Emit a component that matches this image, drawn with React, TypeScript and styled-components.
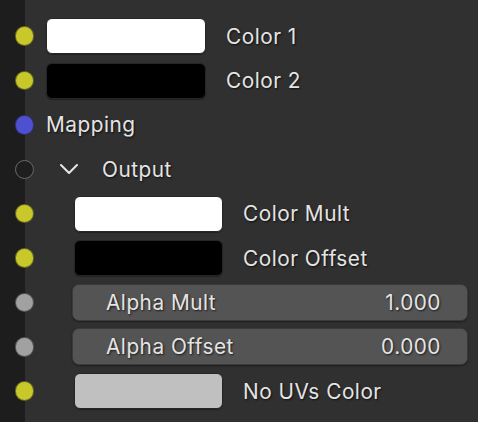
import * as React from 'react';
import styled, { createGlobalStyle } from 'styled-components';

const GlobalStyle = createGlobalStyle`
  html, body {
    margin: 0;
    padding: 0;
    background: #303030;
  }
  body {
    font-family: Inter, "DejaVu Sans", sans-serif;
  }
`;

const ROW_H = 44.375;

const Frame = styled.div`
  display: flex;
  width: 478px;
  height: 422px;
  overflow: hidden;
`;

const Strip = styled.div`
  width: 25px;
  flex-shrink: 0;
  background: #1d1d1d;
`;

const Body = styled.div`
  flex: 1;
  background: #303030;
  padding-top: 14px;
  display: flex;
  flex-direction: column;
`;

const Row = styled.div`
  display: flex;
  align-items: center;
  height: ${ROW_H}px;
  padding-right: 10px;
`;

const Socket = styled.div<{ $color: string; $hollow?: boolean }>`
  width: 17.5px;
  height: 17.5px;
  margin-left: -10.5px;
  flex-shrink: 0;
  border-radius: 50%;
  background: ${p => (p.$hollow ? '#1e1e1e' : p.$color)};
  border: 1.5px solid ${p => (p.$hollow ? '#6a6a6a' : 'rgba(30,30,30,0.55)')};
`;

const Content = styled.div<{ $indent: number }>`
  display: flex;
  align-items: center;
  flex: 1;
  margin-left: ${p => 12 + p.$indent * 28}px;
`;

const Swatch = styled.div<{ $color: string; $w: number }>`
  width: ${p => p.$w}px;
  height: 36px;
  box-sizing: border-box;
  border-radius: 6px;
  background: ${p => p.$color};
  border: 1px solid #262626;
  box-shadow: 0 1px 1px rgba(0, 0, 0, 0.35);
  flex-shrink: 0;
`;

const Label = styled.span<{ $gap?: number }>`
  margin-left: ${p => p.$gap ?? 0}px;
  color: #e4e4e4;
  font-size: 20.8px;
  letter-spacing: 0.5px;
  text-shadow: 1px 1px 2px rgba(0, 0, 0, 0.7);
  white-space: nowrap;
`;

const Field = styled.div`
  flex: 1;
  height: 37px;
  box-sizing: border-box;
  margin-left: -2px;
  border-radius: 7px;
  background: #545454;
  border: 1px solid #3a3a3a;
  box-shadow: 0 1px 2px rgba(0, 0, 0, 0.4);
  display: flex;
  align-items: center;
  justify-content: space-between;
  padding: 0 26px 0 33px;
`;

const Chevron = styled.svg`
  width: 20px;
  height: 12px;
  margin-left: 13px;
  margin-right: 23px;
`;

type Item =
  | { kind: 'color'; label: string; color: string; indent: number }
  | { kind: 'value'; label: string; value: string }
  | { kind: 'plain'; label: string }
  | { kind: 'panel'; label: string };

const items: Item[] = [
  { kind: 'color', label: 'Color 1', color: '#ffffff', indent: 0 },
  { kind: 'color', label: 'Color 2', color: '#000000', indent: 0 },
  { kind: 'plain', label: 'Mapping' },
  { kind: 'panel', label: 'Output' },
  { kind: 'color', label: 'Color Mult', color: '#ffffff', indent: 1 },
  { kind: 'color', label: 'Color Offset', color: '#000000', indent: 1 },
  { kind: 'value', label: 'Alpha Mult', value: '1.000' },
  { kind: 'value', label: 'Alpha Offset', value: '0.000' },
  { kind: 'color', label: 'No UVs Color', color: '#c0c0c0', indent: 1 },
];

const socketColor = (it: Item) => {
  if (it.kind === 'color') return '#c8c82a';
  if (it.kind === 'value') return '#a1a1a1';
  if (it.kind === 'plain') return '#4f4fd2';
  return '#1e1e1e';
};

export default function App() {
  return (
    <>
      <GlobalStyle />
      <Frame>
        <Strip />
        <Body>
          {items.map(it => (
            <Row key={it.label}>
              <Socket $color={socketColor(it)} $hollow={it.kind === 'panel'} />
              {it.kind === 'color' && (
                <Content $indent={it.indent}>
                  <Swatch $color={it.color} $w={it.indent ? 149 : 160} />
                  <Label $gap={it.indent ? 20 : 20}>{it.label}</Label>
                </Content>
              )}
              {it.kind === 'value' && (
                <Content $indent={1}>
                  <Field>
                    <Label>{it.label}</Label>
                    <Label>{it.value}</Label>
                  </Field>
                </Content>
              )}
              {it.kind === 'plain' && (
                <Content $indent={0}>
                  <Label>{it.label}</Label>
                </Content>
              )}
              {it.kind === 'panel' && (
                <Content $indent={0}>
                  <Chevron viewBox="0 0 20 12">
                    <path
                      d="M2 2 L10 10 L18 2"
                      fill="none"
                      stroke="#e6e6e6"
                      strokeWidth="2"
                      strokeLinecap="round"
                      strokeLinejoin="round"
                    />
                  </Chevron>
                  <Label>{it.label}</Label>
                </Content>
              )}
            </Row>
          ))}
        </Body>
      </Frame>
    </>
  );
}
